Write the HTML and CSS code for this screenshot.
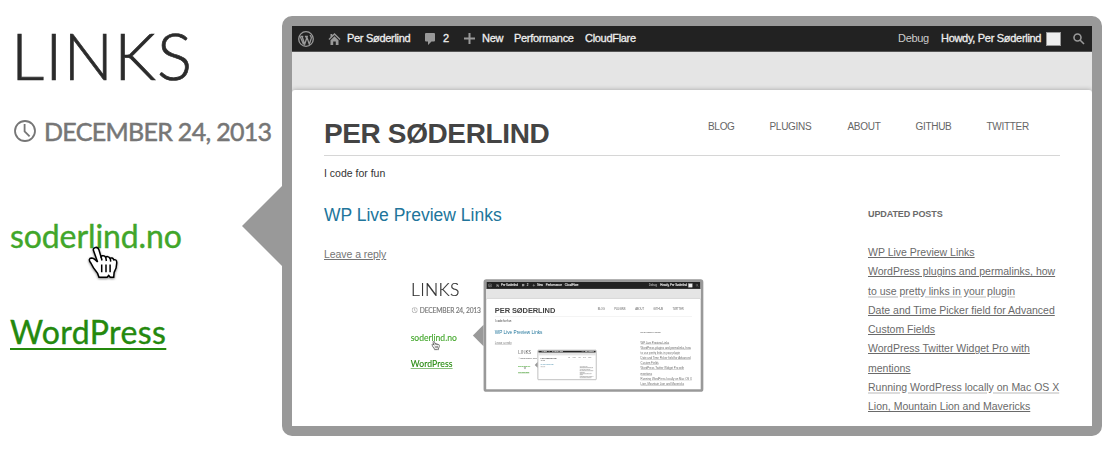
FILE: index.html
```html
<!DOCTYPE html>
<html lang="en">
<head>
<meta charset="utf-8">
<title>WP Live Preview Links</title>
<link rel="stylesheet" href="styles.css">
</head>
<body>
<template id="scene">
  <div class="scene">
    <section class="post">
      <h1 class="post-title">LINKS</h1>
      <div class="post-date">
        <svg class="clock" viewBox="0 0 22 22"><circle cx="11" cy="11" r="10"/><path d="M10.6 4v7.4l5 5"/></svg>
        <span>DECEMBER 24, 2013</span>
      </div>
      <a class="link link-hover"><span>soderlind.no</span>
        <svg class="cursor" viewBox="0 0 34 36">
          <path d="M9.7 2.4c1.7-.2 2.7.8 3.2 2.4l2 6.7c.7-1 3.8-1 4.600.7 1.200-1 3.600-.8 4.300 1 1.500-.7 3.300-.2 3.900 1.600 1.700-.5 2.900.3 3 2.300.2 4.500-.7 7.500-2.600 10.400l-.4 4.700-3.400.1-1.600-1.800-1.600 1.800H13l-1.400-3.900-4.200-5.700-2.900-5.200c-1.900-2.300-1.200-4.400.9-4.500 2.500 0 4.200 1.800 6.200 4.100L7.500 5.500c-.6-1.600.6-2.900 2.200-3.100z"/>
          <path d="M15.700 19.500v7.800M20 19.500v7.800M24.100 19.500v7.800M15 11.500l1 4M19.700 12l.7 4M24.300 13.200l.4 3.500"/>
        </svg>
      </a>
      <a class="link link-plain">WordPress</a>
    </section>
    <section class="preview">
      <div class="screen">
        <div class="adminbar">
          <svg class="wp" viewBox="0 0 16 16"><circle cx="8" cy="8" r="7.300"/><path d="M2.300 5.300h3M4 5.300l2.700 7.900L8.600 7.500 7.800 5.300M6.900 5.300h3M8.600 5.300l2.700 7.900 2-6c.3-1.500-.8-2-1.200-3.200M2.400 6l3.200 7.500"/></svg>
          <svg class="home" viewBox="0 0 12 12"><path d="M6 0 12 6l-.8.900L6 1.900.8 6.900 0 6l2-2V1h1.800v1.300zM6 3.300l4 3.900V12H7.300V8.500H4.700V12H2V7.200z"/></svg>
          <span class="site">Per Søderlind</span>
          <svg class="bubble" viewBox="0 0 10 12"><path d="M1 0h8q1 0 1 1v6.500q0 1-1 1H6.500L3 12V8.500H1q-1 0-1-1V1q0-1 1-1z"/></svg>
          <span class="count">2</span>
          <svg class="plus" viewBox="0 0 11 11"><path d="M4.500 0h2v4.500H11v2H6.500V11h-2V6.500H0v-2h4.500z"/></svg>
          <span class="new">New</span>
          <span class="perf">Performance</span>
          <span class="cloud">CloudFlare</span>
          <span class="debug">Debug</span>
          <span class="howdy">Howdy, Per Søderlind</span>
          <i class="avatar"></i>
          <svg class="search" viewBox="0 0 12 12"><circle cx="4.500" cy="4.500" r="3.500"/><path d="m7 7 4 4"/></svg>
        </div>
        <div class="site-page">
          <header class="site-header">
            <h2 class="site-title">PER SØDERLIND</h2>
            <nav class="nav"><a class="n1">BLOG</a><a class="n2">PLUGINS</a><a class="n3">ABOUT</a><a class="n4">GITHUB</a><a>TWITTER</a></nav>
          </header>
          <div class="columns">
            <main class="main">
              <p class="tagline">I code for fun</p>
              <h3 class="entry-title">WP Live Preview Links</h3>
              <a class="reply">Leave a reply</a>
              <div class="figure"></div>
            </main>
            <aside class="side">
              <h4 class="side-title">UPDATED POSTS</h4>
              <ul class="posts">
                <li><a>WP Live Preview Links</a></li>
                <li><a>WordPress plugins and permalinks, how</a><br><a class="soft">to use pretty links in your plugin</a></li>
                <li><a>Date and Time Picker field for Advanced<br>Custom Fields</a></li>
                <li><a>WordPress Twitter Widget Pro with<br>mentions</a></li>
                <li><a class="soft">Running WordPress locally on Mac OS X</a><br><a>Lion, Mountain Lion and Mavericks</a></li>
              </ul>
            </aside>
          </div>
        </div>
      </div>
    </section>
  </div>
</template>
<script src="script.js"></script>
</body>
</html>
```
FILE: styles.css
```css
* { box-sizing: border-box; }
body { margin: 0; background: #fff; overflow: hidden; font-family: "Liberation Sans", Arial, sans-serif; }
h1, h2, h3, h4, p, ul { margin: 0; padding: 0; font-weight: 400; }
ul { list-style: none; }
svg { display: block; flex: none; }
.scene { display: flex; width: 1116px; height: 450px; }

.post { width: 282px; padding: 15px 0 0 10px; font-family: Lato, sans-serif; white-space: nowrap; }
.post-title { height: 80px; padding-left: 1px; font-size: 65.500px; line-height: 80px; font-weight: 300; letter-spacing: 1.200px; color: #2b2b2b; -webkit-text-stroke: .7px #2b2b2b; }
.post-date { display: flex; align-items: center; height: 32px; margin: 20px 0 0 4px; color: #767676; font-size: 25px; line-height: 32px; letter-spacing: -.69px; -webkit-text-stroke: .5px #767676; }
.clock { width: 22px; height: 22px; margin-right: 8px; fill: none; stroke: #767676; stroke-width: 1.8; }
.link { display: block; position: relative; width: max-content; height: 40px; font-size: 32px; line-height: 40px; }
.link-hover { margin-top: 69px; color: #41a62a; letter-spacing: -.1px; -webkit-text-stroke: .4px #41a62a; }
.link-plain { margin-top: 56px; color: #24890d; letter-spacing: .4px; -webkit-text-stroke: .4px #24890d; text-decoration: underline; text-decoration-thickness: 2px; text-underline-offset: 4px; }
.cursor { position: absolute; left: 76px; top: 29px; width: 34px; height: 36px; fill: #fff; stroke: #000; stroke-width: 1.5; filter: drop-shadow(0 1px 1px rgba(0,0,0,.5)); }

.preview { position: relative; width: 820px; height: 420px; margin-top: 16px; border: 10px solid #999; border-radius: 10px; }
.preview::before { content: ""; position: absolute; left: -50px; top: 160px; border: solid transparent; border-width: 40px 40px 40px 0; border-right-color: #999; }
.screen { height: 400px; overflow: hidden; background: #e5e5e5; }
.adminbar { display: flex; align-items: center; height: 26px; padding: 0 7px 0 6px; background: #222; border-bottom: 1px solid #555; color: #eee; font-size: 11px; line-height: 24px; letter-spacing: -.3px; white-space: nowrap; -webkit-text-stroke: .3px #eee; }
.adminbar span { height: 25px; }
.wp { width: 16px; height: 16px; margin-right: 14px; fill: none; stroke: #999; stroke-width: 1.3; }
.home { width: 13px; height: 12px; margin-right: 6px; fill: #999; }
.site { width: 78px; }
.bubble { width: 10px; height: 12px; margin-right: 8px; fill: #999; }
.count { width: 21px; }
.plus { width: 11px; height: 11px; margin-right: 7px; fill: #999; }
.new { width: 32px; }
.perf { width: 71px; }
.debug { margin-left: auto; width: 43px; color: #ccc; -webkit-text-stroke: 0; }
.howdy { width: 105px; }
.avatar { width: 15px; height: 14px; margin-right: 12px; background: #eee; border: 1px solid #999; }
.search { width: 12px; height: 12px; fill: none; stroke: #999; stroke-width: 1.6; }

.site-page { height: 336px; margin-top: 38px; padding: 0 32px; background: #fff; border-radius: 3px 3px 0 0; box-shadow: 0 0 5px rgba(0,0,0,.3); }
.site-header { display: flex; justify-content: space-between; height: 66px; border-bottom: 1px solid #d6d6d6; }
.site-title { padding-top: 28px; font-size: 28px; line-height: 32px; font-weight: 700; letter-spacing: -.38px; color: #444; }
.nav { display: flex; width: 352px; padding-top: 30px; font-size: 10px; line-height: 14px; letter-spacing: -.3px; color: #666; }
.n1 { width: 61.500px; }
.n2 { width: 78px; }
.n3 { width: 68px; }
.n4 { width: 71px; }
.columns { display: flex; justify-content: space-between; white-space: nowrap; }
.tagline { padding-top: 10px; font-size: 10.500px; line-height: 14px; color: #333; }
.entry-title { margin-top: 24px; font-size: 17.500px; line-height: 22px; color: #21759b; }
.reply { display: block; margin-top: 19px; font-size: 10.500px; line-height: 18px; letter-spacing: -.06px; color: #757575; text-decoration: underline; }
.figure { width: 300px; height: 121px; margin: 12px 0 0 84.400px; overflow: hidden; }
.figure .scene { transform: scale(.268); transform-origin: 0 0; }
.side { width: 192px; padding-top: 50px; color: #6a6a6a; }
.side-title { font-size: 9px; line-height: 16px; font-weight: 700; letter-spacing: -.1px; }
.posts { margin-top: 21px; font-size: 10.500px; line-height: 19.250px; }
.posts a { text-decoration: underline; }
.posts .soft { text-decoration: underline 2px #dcdcdc; text-underline-offset: 1px; }
```
FILE: script.js
```js
// Each preview shows the same page again, at a smaller scale.
const template = document.getElementById('scene');
let host = document.body;
for (let depth = 0; depth < 3; depth++) {
  host.appendChild(template.content.cloneNode(true));
  host = host.querySelector('.scene:last-child .figure');
}
```
